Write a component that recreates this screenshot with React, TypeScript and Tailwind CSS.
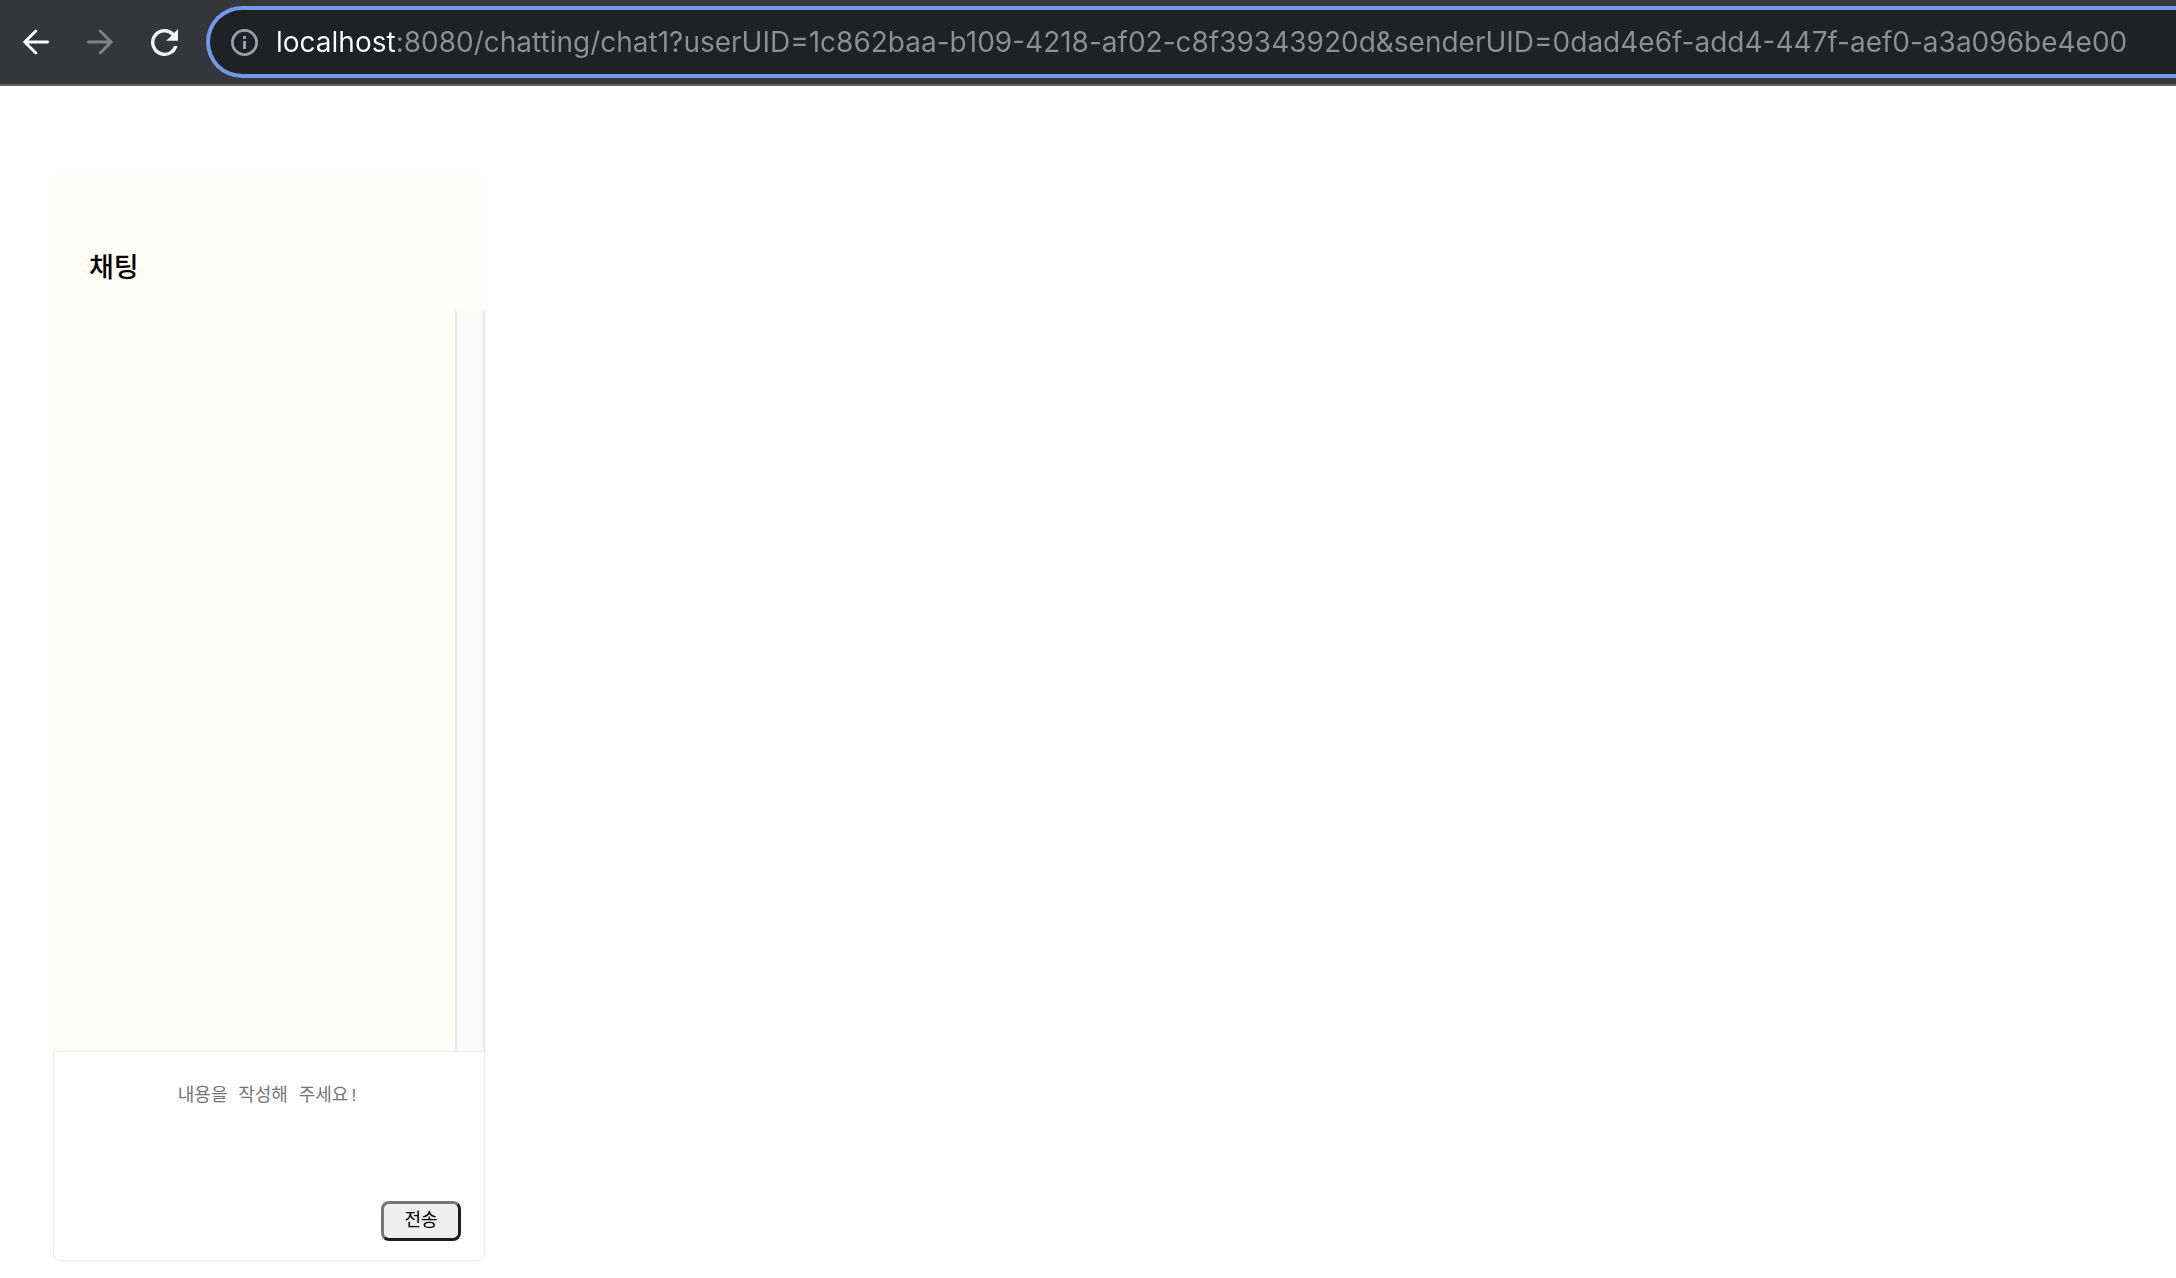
import React from "react";

function BackIcon() {
  return (
    <svg viewBox="0 0 26 26" className="size-[26px]" fill="none" stroke="currentColor" strokeWidth="2.8" strokeLinecap="round" aria-hidden="true">
      <path d="M24.6 13H2M12.8 2L1.8 13L12.8 24" />
    </svg>
  );
}

function ForwardIcon() {
  return (
    <svg viewBox="0 0 26 26" className="size-[26px]" fill="none" stroke="currentColor" strokeWidth="2.8" strokeLinecap="round" aria-hidden="true">
      <path d="M1.4 13H24M13.2 2L24.2 13L13.2 24" />
    </svg>
  );
}

function ReloadIcon() {
  return (
    <svg viewBox="4 4 16 16" className="size-[27px]" fill="currentColor" aria-hidden="true">
      <path d="M17.65 6.35A7.96 7.96 0 0 0 12 4a8 8 0 1 0 7.73 10h-2.08A6 6 0 1 1 12 6c1.66 0 3.14.69 4.22 1.78L13 11h7V4z" />
    </svg>
  );
}

function InfoIcon() {
  return (
    <svg viewBox="0 0 27 27" className="size-[27px]" aria-hidden="true">
      <circle cx="13.5" cy="13.5" r="12.1" fill="none" stroke="currentColor" strokeWidth="2.8" />
      <path fill="currentColor" d="M12 7h3v3h-3zM12 12h3v8h-3z" />
    </svg>
  );
}

function Toolbar() {
  return (
    <header className="flex h-[86px] items-center border-b-2 border-[#5f5f64] bg-[#35363a] pl-[23px]">
      <nav className="flex shrink-0 items-center gap-[38px]" aria-label="Browser">
        <button type="button" aria-label="Back" className="text-white"><BackIcon /></button>
        <button type="button" aria-label="Forward" className="text-[#818284]"><ForwardIcon /></button>
        <button type="button" aria-label="Reload" className="text-[#f1f3f4]"><ReloadIcon /></button>
      </nav>
      <form className="ml-7 flex h-[72px] min-w-0 flex-1 items-center gap-[18px] rounded-l-full border-4 border-r-0 border-[#7099ec] bg-[#202124] pl-[21px]">
        <button type="button" aria-label="Site information" className="shrink-0 text-[#9aa0a6]"><InfoIcon /></button>
        <input
          type="text"
          aria-label="Address"
          spellCheck={false}
          defaultValue="localhost:8080/chatting/chat1?userUID=1c862baa-b109-4218-af02-c8f39343920d&senderUID=0dad4e6f-add4-447f-aef0-a3a096be4e00"
          className="min-w-0 flex-1 bg-[linear-gradient(to_right,#ffffff_119px,#8e8f91_119px)] bg-clip-text font-['Inter',sans-serif] text-[28px] leading-[40px] text-transparent caret-white outline-none"
        />
      </form>
    </header>
  );
}

function Chat() {
  return (
    <main className="mt-[86px] ml-[53px] flex w-full max-w-[432px] flex-col">
      <section className="rounded-t-lg rounded-bl-lg bg-[#fffdf5]">
        <h1 className="px-9 pt-[75px] pb-[26px] font-['Noto_Sans_CJK_KR',sans-serif] text-[27px] leading-[38px] font-medium text-black">채팅</h1>
        <div className="flex h-[740px] justify-end">
          <div className="w-[30px] border-x-2 border-[#e8e8e8] bg-[#fafafa]" />
        </div>
      </section>
      <form className="flex flex-col rounded-b-lg border border-[#ebebeb] bg-white pt-[31px] pr-[23px] pb-[19px] pl-[22px]">
        <textarea
          aria-label="내용"
          placeholder="내용을 작성해 주세요!"
          className="h-[99px] w-full resize-none text-center font-['Liberation_Mono','Noto_Sans_CJK_KR',monospace] text-[18px] leading-[27px] text-black outline-none placeholder:text-[#757575]"
        />
        <button
          type="submit"
          className="mt-[19px] h-10 w-20 self-end rounded-lg border-[3px] border-t-[#767676] border-r-[#1e1e1e] border-b-[#1e1e1e] border-l-[#767676] bg-[#efefef] pb-1.5 font-['Noto_Sans_CJK_KR',sans-serif] text-[18px] leading-[27px] text-black"
        >
          전송
        </button>
      </form>
    </main>
  );
}

export default function App() {
  return (
    <div className="min-h-screen bg-white">
      <Toolbar />
      <Chat />
    </div>
  );
}
